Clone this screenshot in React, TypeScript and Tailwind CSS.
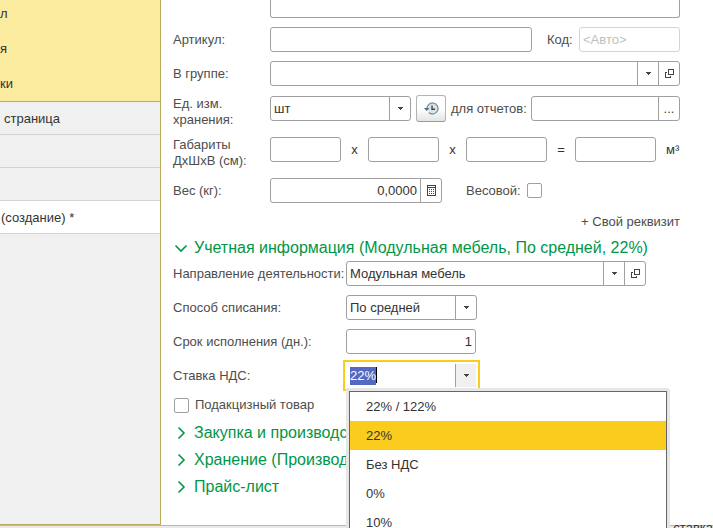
import React, { useEffect, useRef, useState } from 'react';

const field = 'h-[25px] rounded-[3px] border border-[#a0a0a0] bg-white';
const bareInput = 'w-full min-w-0 bg-transparent px-[3px] text-[#333] outline-none';
const sideButton =
  'flex h-full w-[21px] shrink-0 items-center justify-center border-l border-[#a0a0a0] text-[#444]';

const CaretIcon = () => (
  <svg width="5" height="3" viewBox="0 0 5 3" fill="currentColor" shapeRendering="crispEdges">
    <path d="M0 0h5v1H0zM1 1h3v1H1zM2 2h1v1H2z" />
  </svg>
);

const OpenIcon = () => (
  <svg
    width="9"
    height="9"
    viewBox="0 0 9 9"
    fill="none"
    stroke="currentColor"
    shapeRendering="crispEdges"
  >
    <path d="M3.5 0.5h5v5h-5zM2 3.5H0.5v5h5V7" />
  </svg>
);

const CalculatorIcon = () => (
  <svg width="9" height="11" viewBox="0 0 9 11" shapeRendering="crispEdges">
    <path d="M0.5 0.5h8v10h-8zM0 2.5h9" fill="none" stroke="#444" />
    <path
      d="M2 4h1v1H2zM4 4h1v1H4zM6 4h1v1H6zM2 6h1v1H2zM4 6h1v1H4zM6 6h1v1H6zM2 8h1v1H2zM4 8h1v1H4zM6 8h1v1H6z"
      fill="#444"
    />
  </svg>
);

const HistoryIcon = () => (
  <svg width="15" height="13" viewBox="0 0 15 13" fill="none">
    <circle cx="8.5" cy="6.5" r="5" fill="#e2e2e0" />
    <path d="M3 7a5.5 5.5 0 1 1 1.8 3.6" stroke="#6f98b2" strokeWidth="1.4" />
    <path d="M0 6h5.4L2.7 9z" fill="#3f6f8f" />
    <path d="M8 3.5v3.8h3" stroke="#444" strokeWidth="1.4" />
  </svg>
);

const Chevron = ({ open }: { open?: boolean }) => (
  <svg
    width="14"
    height="14"
    viewBox="0 0 14 14"
    fill="none"
    stroke="#009646"
    strokeWidth="1.6"
    className="shrink-0"
  >
    <path d={open ? 'M1.5 4.5L7 10l5.5-5.5' : 'M4.5 1.5L10 7l-5.5 5.5'} />
  </svg>
);

interface SectionTitleProps {
  title: string;
  open?: boolean;
}

const SectionTitle: React.FC<SectionTitleProps> = ({ title, open }) => (
  <button
    type="button"
    aria-expanded={!!open}
    className="flex h-[27px] items-center gap-[6px] pl-[1px] text-left text-[16px] whitespace-nowrap text-[#009646]"
  >
    <Chevron open={open} />
    {title}
  </button>
);

interface RowProps {
  id: string;
  label: string;
  wide?: boolean;
  children: React.ReactNode;
}

const Row: React.FC<RowProps> = ({ id, label, wide, children }) => (
  <div className="flex items-center">
    <label htmlFor={id} className={wide ? 'w-[173px] shrink-0' : 'w-[97px] shrink-0'}>
      {label}
    </label>
    <div className="flex min-w-0 flex-1 items-center">{children}</div>
  </div>
);

interface TallRowProps {
  id: string;
  lines: [string, string];
  children: React.ReactNode;
}

const TallRow: React.FC<TallRowProps> = ({ id, lines, children }) => (
  <div className="flex items-start">
    <label htmlFor={id} className="w-[97px] shrink-0 leading-[16px]">
      {lines[0]}
      <br />
      {lines[1]}
    </label>
    <div className="flex min-w-0 flex-1 items-center">{children}</div>
  </div>
);

const vatRates = ['22% / 122%', '22%', 'Без НДС', '0%', '10%'];

const VatField = () => {
  const [rate, setRate] = useState('22%');
  const inputRef = useRef<HTMLInputElement>(null);

  useEffect(() => {
    inputRef.current?.focus();
    inputRef.current?.select();
  }, []);

  return (
    <div className="relative -my-[3px] -ml-[3px] flex h-[31px] w-[137px] border-2 border-[#facc1e] bg-white p-[2px]">
      <input
        id="vat"
        ref={inputRef}
        value={rate}
        onChange={(e) => setRate(e.target.value)}
        className={`${bareInput} selection:bg-[#5468c4] selection:text-white`}
      />
      <span className="absolute top-[5px] left-[31px] h-4 w-px bg-black"></span>
      <button
        type="button"
        aria-label="Ставка НДС"
        className="flex h-full w-[21px] shrink-0 items-center justify-center border-l border-[#a0a0a0] bg-[#f0f0f0] text-[#444]"
      >
        <CaretIcon />
      </button>
      <div className="absolute top-[26px] left-[1px] z-10 w-[324px] rounded-tr-[3px] bg-[#e6e6e6] p-[3px]">
        <ul role="listbox" className="border border-[#666] bg-white text-[#333]">
          {vatRates.map((item) => (
            <li
              key={item}
              role="option"
              aria-selected={item === rate}
              onClick={() => setRate(item)}
              className={`flex h-[29px] items-center px-4 ${item === rate ? 'bg-[#facc1e]' : ''}`}
            >
              {item}
            </li>
          ))}
        </ul>
      </div>
    </div>
  );
};

const Sidebar = () => (
  <aside className="flex w-[161px] shrink-0 flex-col border-r border-b border-[#b9ad5c] bg-[#f0f0f0] text-[#333]">
    <nav className="flex flex-col border-b border-[#b9ad5c] bg-[#fbeb9e]">
      {['л', 'я', 'ки'].map((item) => (
        <a key={item} href="#" className="flex h-[35px] items-center first:h-[31px] first:pb-[3px]">
          {item}
        </a>
      ))}
    </nav>
    <nav className="flex flex-col">
      {['страница', '', '', '(создание) *'].map((item, index) => (
        <a
          key={index}
          href="#"
          className={`flex h-[33px] items-center border-b border-[#d4d4d4] pt-0.5 ${
            index === 3 ? 'bg-white pl-[1px]' : 'pl-1'
          }`}
        >
          {item}
        </a>
      ))}
    </nav>
  </aside>
);

const ProductForm = () => (
  <main className="min-w-0 flex-1 bg-white pr-[33px] pl-3 text-[#4d4d4d]">
    <div className="flex flex-col gap-[9px]">
      <div className="flex pl-[97px]">
        <textarea
          aria-label="Наименование"
          className="h-[18px] w-full resize-none rounded-b-[3px] border border-t-0 border-[#a0a0a0] outline-none"
        />
      </div>
      <Row id="article" label="Артикул:">
        <input id="article" className={`${field} min-w-0 flex-1 px-[3px]`} />
        <label htmlFor="code" className="ml-[15px] w-8 shrink-0">
          Код:
        </label>
        <input
          id="code"
          placeholder="<Авто>"
          className="h-[25px] w-[101px] rounded-[3px] border border-[#d4d4d4] px-[3px] placeholder:text-[#bfbfbf]"
        />
      </Row>
      <Row id="group" label="В группе:">
        <div className={`${field} flex flex-1`}>
          <input id="group" className={bareInput} />
          <button type="button" aria-label="Выбрать группу" className={sideButton}>
            <CaretIcon />
          </button>
          <button type="button" aria-label="Открыть группу" className={sideButton}>
            <OpenIcon />
          </button>
        </div>
      </Row>
      <div className="pt-px">
        <TallRow id="unit" lines={['Ед. изм.', 'хранения:']}>
          <div className={`${field} flex w-[141px]`}>
            <select id="unit" className={`${bareInput} appearance-none`}>
              <option>шт</option>
            </select>
            <span className={`${sideButton} pointer-events-none`}>
              <CaretIcon />
            </span>
          </div>
          <button
            type="button"
            aria-label="История"
            className="-my-px ml-[5px] flex h-[27px] w-[30px] items-center justify-center rounded-[3px] border border-[#b4b4b4] border-b-[#999] bg-linear-to-b from-white from-50% to-[#e4e4e4]"
          >
            <HistoryIcon />
          </button>
          <label htmlFor="report" className="ml-[5px] w-20 shrink-0 whitespace-nowrap">
            для отчетов:
          </label>
          <div className={`${field} flex min-w-0 flex-1`}>
            <input id="report" className={bareInput} />
            <button type="button" aria-label="Выбрать единицу" className={sideButton}>
              ...
            </button>
          </div>
        </TallRow>
      </div>
      <TallRow id="length" lines={['Габариты', 'ДхШхВ (см):']}>
        <input id="length" className={`${field} w-[71px] px-[3px]`} />
        <span className="w-[27px] text-center text-[#333]">x</span>
        <input aria-label="Ширина" className={`${field} w-[71px] px-[3px]`} />
        <span className="w-[27px] text-center text-[#333]">x</span>
        <input aria-label="Высота" className={`${field} w-[81px] px-[3px]`} />
        <span className="w-7 text-center text-[#333]">=</span>
        <input aria-label="Объем" className={`${field} w-[81px] px-[3px]`} />
        <span className="ml-[10px] text-[#333]">м³</span>
      </TallRow>
      <Row id="weight" label="Вес (кг):">
        <div className={`${field} flex w-[172px]`}>
          <input id="weight" defaultValue="0,0000" className={`${bareInput} text-right`} />
          <button type="button" aria-label="Калькулятор" className={sideButton}>
            <CalculatorIcon />
          </button>
        </div>
        <label htmlFor="weighed" className="ml-6 w-[61px] shrink-0">
          Весовой:
        </label>
        <input
          id="weighed"
          type="checkbox"
          className="h-[15px] w-[15px] appearance-none rounded-[2px] border border-[#a0a0a0]"
        />
      </Row>
    </div>

    <div className="mt-[10px] flex justify-end">
      <button type="button">+ Свой реквизит</button>
    </div>

    <div className="mt-[3px] flex flex-col">
      <SectionTitle open title="Учетная информация (Модульная мебель, По средней, 22%)" />
      <div className="flex flex-col gap-[9px]">
        <Row id="activity" label="Направление деятельности:" wide>
          <div className={`${field} flex w-[300px]`}>
            <input id="activity" defaultValue="Модульная мебель" className={bareInput} />
            <button type="button" aria-label="Выбрать направление" className={sideButton}>
              <CaretIcon />
            </button>
            <button type="button" aria-label="Открыть направление" className={sideButton}>
              <OpenIcon />
            </button>
          </div>
        </Row>
        <Row id="method" label="Способ списания:" wide>
          <div className={`${field} flex w-[131px]`}>
            <select id="method" className={`${bareInput} appearance-none`}>
              <option>По средней</option>
            </select>
            <span className={`${sideButton} pointer-events-none`}>
              <CaretIcon />
            </span>
          </div>
        </Row>
        <Row id="term" label="Срок исполнения (дн.):" wide>
          <input id="term" defaultValue="1" className={`${field} w-[130px] px-[3px] text-right text-[#333]`} />
        </Row>
        <Row id="vat" label="Ставка НДС:" wide>
          <VatField />
        </Row>
      </div>
      <label className="mt-2 flex items-center gap-[6px] pl-[1px]">
        <input
          type="checkbox"
          className="h-[15px] w-[15px] appearance-none rounded-[2px] border border-[#a0a0a0]"
        />
        Подакцизный товар
      </label>
    </div>

    <div className="mt-[5px] flex flex-col items-start">
      <SectionTitle title="Закупка и производство" />
      <SectionTitle title="Хранение (Производство)" />
      <SectionTitle title="Прайс-лист" />
    </div>
  </main>
);

const App: React.FC = () => (
  <div className="flex h-screen flex-col overflow-hidden font-['Liberation_Sans',Arial,sans-serif] text-[13px] leading-[18px]">
    <div className="flex min-h-0 flex-1 border-b border-[#c9bd70]">
      <Sidebar />
      <ProductForm />
    </div>
    <footer className="h-0.5 shrink-0 bg-[#e9e9e9] text-right leading-[4px] text-[#333]">ставка</footer>
  </div>
);

export default App;
